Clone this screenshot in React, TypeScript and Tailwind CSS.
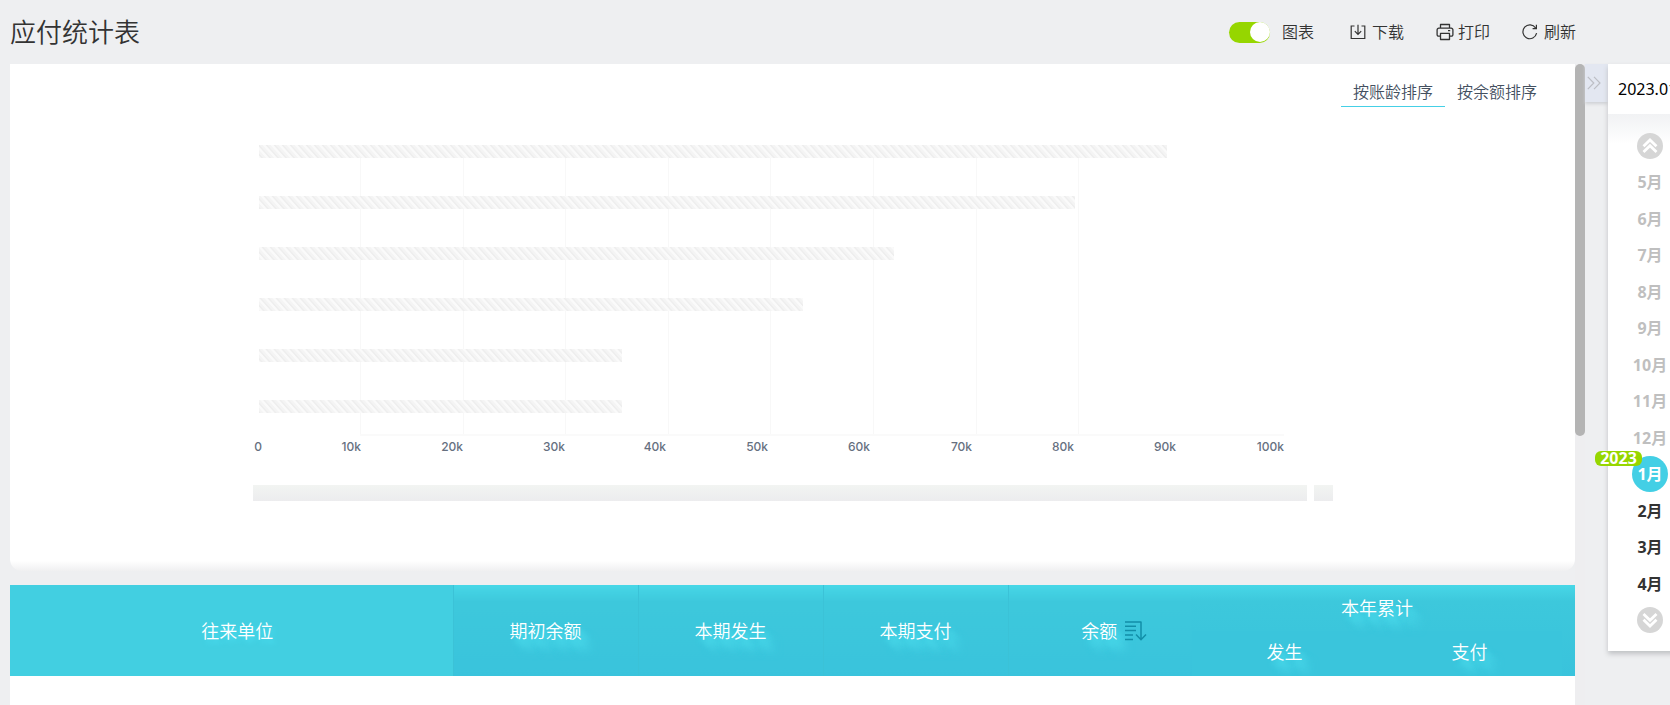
import React, { useState } from "react";

const bars = [908, 816, 635, 544, 363, 363];
const ticks = [
  { label: "10k", end: 108 },
  { label: "20k", end: 210 },
  { label: "30k", end: 312 },
  { label: "40k", end: 413 },
  { label: "50k", end: 515 },
  { label: "60k", end: 617 },
  { label: "70k", end: 719 },
  { label: "80k", end: 821 },
  { label: "90k", end: 923 },
  { label: "100k", end: 1031 },
];
const months = [5, 6, 7, 8, 9, 10, 11, 12, 1, 2, 3, 4];

function DownloadIcon() {
  return (
    <svg width="16" height="16" viewBox="0 0 16 16" fill="none" stroke="currentColor" strokeWidth="1.2">
      <path d="M4.5 2H1.2v12.5h13.6V2h-3.3M8 0.8v9.4M4.8 7.2 8 10.4l3.2-3.2" />
    </svg>
  );
}

function PrintIcon() {
  return (
    <svg width="18" height="18" viewBox="0 0 18 18" fill="none" stroke="currentColor" strokeWidth="1.3" strokeLinejoin="round">
      <path d="M4.5 5.2V1.5h9v3.7M4.5 13.2H2.6a1.5 1.5 0 0 1-1.5-1.5V6.9a1.7 1.7 0 0 1 1.7-1.7h12.4a1.7 1.7 0 0 1 1.7 1.7v4.8a1.5 1.5 0 0 1-1.5 1.5h-1.9M4.5 10.4h9v6.1h-9zM12 7.6h2.2" />
    </svg>
  );
}

function RefreshIcon() {
  return (
    <svg width="16" height="16" viewBox="0 0 16 16" fill="none" stroke="currentColor" strokeWidth="1.2">
      <path d="M14.6 9.2A6.9 6.9 0 1 1 13.6 4M14.4 0.8v3.8h-3.8" />
    </svg>
  );
}

function SortIcon() {
  return (
    <svg width="22" height="20" viewBox="0 0 22 20" fill="none" stroke="#128fa8" strokeWidth="1.5">
      <path d="M0 1h16.5M0 5.2h11M0 9.6h11M0 14h8M0 18.4h8M16 1v17.5M11 13.5l5 5.2 5-5.2" />
    </svg>
  );
}

function CircleChevrons({ down = false }: { down?: boolean }) {
  return (
    <svg width="26" height="26" viewBox="0 0 26 26" className={down ? "rotate-180" : ""}>
      <circle cx="13" cy="13" r="13" fill="#d6d6d6" />
      <path d="M6.5 13.2 13 7l6.5 6.2M6.5 19 13 12.8l6.5 6.2" fill="none" stroke="#fff" strokeWidth="2.8" />
    </svg>
  );
}

function Chart() {
  return (
    <svg width="1080" height="362" viewBox="0 0 1080 362" className="max-w-full" role="img" aria-label="应付统计图表">
      <defs>
        <pattern id="hatch" width="8" height="13" patternUnits="userSpaceOnUse" patternTransform="skewX(42)">
          <rect width="8" height="13" fill="#fafafa" />
          <rect width="5" height="13" fill="#f4f4f4" />
          <rect width="2" height="13" fill="#eeeeee" />
        </pattern>
        <linearGradient id="slider" x1="0" y1="0" x2="0" y2="1">
          <stop offset="0" stopColor="#f2f4f2" />
          <stop offset="1" stopColor="#ececee" />
        </linearGradient>
      </defs>
      {ticks.slice(0, 8).map((t, i) => (
        <rect key={t.label} x={Math.round(107 + i * 102.6)} y="5" width="1" height="290" fill="#f8f8f8" />
      ))}
      <rect x="107" y="294" width="924" height="2" fill="#fafafa" />
      {bars.map((w, i) => (
        <rect key={i} x="6" y={5 + i * 51} width={w} height="13" fill="url(#hatch)" />
      ))}
      <g fill="#66707f" fontFamily="Inter, sans-serif" fontSize="12" fontWeight="500" textAnchor="end">
        <text x="9" y="311">0</text>
        {ticks.map((t) => (
          <text key={t.label} x={t.end} y="311">{t.label}</text>
        ))}
      </g>
      <rect x="0" y="345" width="1054" height="16" fill="url(#slider)" />
      <rect x="1061" y="345" width="19" height="16" fill="url(#slider)" />
    </svg>
  );
}

const glow = "text-shadow-[4px_6px_4px_#48d9ea,8px_10px_5px_#48d5e8,12px_14px_6px_#44cfe3]";
const head = "bg-linear-to-b from-[#47d7e7] from-0% via-[#3dc8dc] via-18% to-[#39c3dc] p-0 font-[350]";
const divider = "border-l border-[#3bc2d7]";

export default function App() {
  const [chart, setChart] = useState(true);
  const [sort, setSort] = useState("age");
  const [month, setMonth] = useState(1);

  const tab = (id: string, label: string) => (
    <button
      type="button"
      onClick={() => setSort(id)}
      className={
        sort === id
          ? "h-[30px] border-b border-[#45d0e6] px-3 leading-6"
          : "h-[30px] border-b border-transparent px-3 leading-6"
      }
    >
      {label}
    </button>
  );

  return (
    <div className="flex min-h-screen flex-col overflow-hidden bg-[#eeeff1] font-['Noto_Sans','Noto_Sans_CJK_SC',sans-serif] text-base text-[#333]">
      <header className="flex h-16 items-center justify-between pr-[94px] pl-[10px]">
        <h1 className="text-[26px] font-[350]">应付统计表</h1>
        <div className="flex items-center font-[350]">
          <label className="flex items-center gap-3">
            <input type="checkbox" className="peer sr-only" checked={chart} onChange={(e) => setChart(e.target.checked)} />
            <span className="flex h-[21px] w-[41px] items-center rounded-full bg-[#bbb] peer-checked:justify-end peer-checked:bg-[#96d600]">
              <span className="size-5 rounded-full bg-white" />
            </span>
            图表
          </label>
          <button type="button" className="ml-9 flex items-center gap-1.5"><DownloadIcon />下载</button>
          <button type="button" className="ml-8 flex items-center gap-1"><PrintIcon />打印</button>
          <button type="button" className="ml-8 flex items-center gap-1.5"><RefreshIcon />刷新</button>
        </div>
      </header>

      <div className="flex flex-1 items-stretch pl-[10px]">
        <main className="flex min-w-0 flex-1 flex-col">
          <section className="h-[507px] rounded-b-xl bg-linear-to-b from-white from-98% to-[#f0f0f1]">
            <div className="flex justify-end pt-[13px] pr-[26px] font-[350] text-[#44505f]">
              {tab("age", "按账龄排序")}
              {tab("balance", "按余额排序")}
            </div>
            <div className="flex justify-center pt-[33px]">{chart && <Chart />}</div>
          </section>
          <table className="mt-[14px] w-full table-fixed border-collapse text-lg text-white">
            <colgroup>
              <col />
              <col className="w-[185px]" />
              <col className="w-[185px]" />
              <col className="w-[185px]" />
              <col className="w-[184px]" />
              <col className="w-[185px]" />
              <col className="w-[185px]" />
              <col className="w-[13px]" />
            </colgroup>
            <thead>
              <tr className="h-[46px]">
                <th rowSpan={2} className="bg-[#42cfe1] p-0 pl-3 font-[350]"><span className="text-shadow-[3px_4px_4px_#49dcef]">往来单位</span></th>
                <th rowSpan={2} className={`${head} ${divider}`}><span className={glow}>期初余额</span></th>
                <th rowSpan={2} className={`${head} ${divider}`}><span className={glow}>本期发生</span></th>
                <th rowSpan={2} className={`${head} ${divider}`}><span className={glow}>本期支付</span></th>
                <th rowSpan={2} className={`${head} ${divider}`}>
                  <button type="button" className="inline-flex items-center gap-2 pl-7">
                    <span className={glow}>余额</span><SortIcon />
                  </button>
                </th>
                <th colSpan={2} className="bg-linear-to-b from-[#47d7e7] via-[#3dc8dc] via-36% to-[#3bc6dc] p-0 font-[350]"><span className={glow}>本年累计</span></th>
                <td rowSpan={2} className={head} />
              </tr>
              <tr className="h-[45px]">
                <th className="bg-[#3ac5dc] p-0 pb-1 font-[350]"><span className={glow}>发生</span></th>
                <th className="bg-[#3ac5dc] p-0 pb-1 font-[350]"><span className={glow}>支付</span></th>
              </tr>
            </thead>
          </table>
          <div className="flex-1 bg-white" />
        </main>

        <div className="w-[10px] bg-[#eeeef0]">
          <div className="h-[372px] rounded-full bg-[#b4b4b4]" />
        </div>

        <button type="button" aria-label="收起" className="flex h-[38px] w-[23px] justify-center bg-[#e3e7f1] pt-3 pr-1.5 shadow-[0_2px_3px_#cfd1d5]">
          <svg width="14" height="14" viewBox="0 0 14 14" fill="none" stroke="#bcbec4" strokeWidth="1.2">
            <path d="m0.8 0.8 6 6.2-6 6.2M7 0.8 13 7l-6 6.2" />
          </svg>
        </button>

        <aside className="-mr-[22px] flex h-[587px] w-[84px] flex-col bg-white shadow-[0_3px_5px_#bfc1c4]">
          <div className="flex h-[50px] items-center pl-[10px] text-black">2023.01</div>
          <div className="flex h-[50px] justify-center bg-linear-to-b from-[#f1f2f4] to-white to-60% pt-[19px]">
            <button type="button" aria-label="上一页" className="size-[26px]"><CircleChevrons /></button>
          </div>
          <ul className="grid h-[438px] auto-rows-fr font-bold">
            {months.map((m) => (
              <li key={m} className="relative flex items-center justify-center">
                <button
                  type="button"
                  onClick={() => setMonth(m)}
                  className={
                    m === month
                      ? "size-9 rounded-full bg-[#43cfe5] text-white"
                      : m > 4
                        ? "h-9 text-[#bfbfbf]"
                        : "h-9 text-[#333]"
                  }
                >
                  {m}月
                </button>
                {m === 1 && (
                  <span className="absolute -top-[5px] -left-[13px] h-[15px] w-[47px] rounded-md bg-[#96d600] text-center leading-[15px] text-white">
                    2023
                  </span>
                )}
              </li>
            ))}
          </ul>
          <div className="flex justify-center pt-[5px]">
            <button type="button" aria-label="下一页" className="size-[26px]"><CircleChevrons down /></button>
          </div>
        </aside>
      </div>
    </div>
  );
}
